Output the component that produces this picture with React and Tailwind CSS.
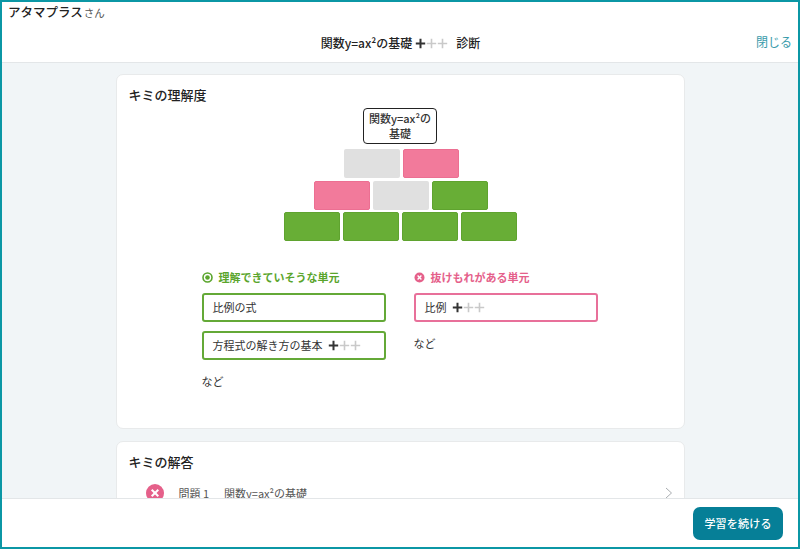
const jp = { fontFamily: '"Noto Sans CJK JP", "Noto Sans", sans-serif' };

function Plus({ size = 11 }) {
  const colors = ["#333333", "#c9c9c9", "#c9c9c9"];
  return (
    <span className="inline-flex items-center">
      {colors.map((c, i) => (
        <svg key={i} width={size} height={size} viewBox="0 0 11 11" className="block">
          <path d="M0.8 5.5H10.2M5.5 0.8V10.2" stroke={c} strokeWidth={i === 0 ? 2 : 1.6} fill="none" />
        </svg>
      ))}
    </span>
  );
}

function Brick({ color }) {
  const cls = {
    gray: "bg-[#e0e0e0]",
    pink: "bg-[#f27a9b] border border-[#ec6f92]",
    green: "bg-[#68ae36] border border-[#5fa32f]",
  }[color];
  return <div className={`w-[56px] h-[29px] rounded-[2px] ${cls}`} />;
}

function UnitBox({ border, children }) {
  return (
    <div className={`w-[184px] h-[29px] rounded-[3px] border-2 ${border} bg-white flex items-center gap-[5px] pl-[9px] text-[11px] text-[#333]`}>
      {children}
    </div>
  );
}

export default function App() {
  return (
    <div style={jp} className="w-[800px] h-[549px] border-2 border-[#0b97a5] flex flex-col overflow-hidden bg-white text-[#222]">
      <header className="h-[61px] shrink-0 bg-white border-b border-[#e3e6e8] relative flex flex-col">
        <div className="pl-[6px] pt-[1px] h-[21px] flex items-baseline">
          <span className="text-[12.5px] leading-[18px] font-medium text-[#222]">アタマプラス</span>
          <span className="text-[10.5px] ml-[1px] text-[#555]">さん</span>
        </div>
        <div className="flex-1 flex items-center justify-center gap-[3px] pt-[1px] pl-[1px] text-[12px] font-medium">
          <span>関数y=ax²の基礎</span>
          <Plus />
          <span className="ml-[5px]">診断</span>
        </div>
        <span className="absolute right-[6px] top-[31px] text-[12px] leading-[18px] text-[#3a9bab]">閉じる</span>
      </header>

      <main className="flex-1 min-h-0 overflow-hidden bg-[#f1f5f7] flex flex-col items-center pt-[11px] gap-[12px]">
        <section className="w-[569px] h-[355px] shrink-0 bg-white rounded-[7px] border border-[#e8eaeb] flex flex-col items-center relative">
          <h2 className="self-start pl-[12px] pt-[10px] text-[13px] leading-[20px] font-medium text-[#222]">キミの理解度</h2>
          <div className="mt-[3px] w-[74px] h-[36px] rounded-[4px] border border-[#222] flex items-center justify-center text-center text-[11px] leading-[15px] font-medium text-[#333]">
            関数y=ax²の<br />基礎
          </div>
          <div className="mt-[5px] flex flex-col items-center">
            <div className="flex gap-[3px] pl-[2px]"><Brick color="gray" /><Brick color="pink" /></div>
            <div className="mt-[3px] flex gap-[3px] pl-[2px]"><Brick color="pink" /><Brick color="gray" /><Brick color="green" /></div>
            <div className="mt-[2px] flex gap-[3px] pl-[1px]"><Brick color="green" /><Brick color="green" /><Brick color="green" /><Brick color="green" /></div>
          </div>
          <div className="mt-[27px] w-full flex pl-[85px] gap-[28px]">
            <div className="w-[184px] flex flex-col">
              <div className="flex items-center gap-[6px] h-[18px] text-[11px] font-bold text-[#5aa52c]">
                <svg width="11" height="11" viewBox="0 0 11 11">
                  <circle cx="5.5" cy="5.5" r="4.5" fill="none" stroke="#5aa52c" strokeWidth="1.6" />
                  <circle cx="5.5" cy="5.5" r="2.3" fill="#5aa52c" />
                </svg>
                <span>理解できていそうな単元</span>
              </div>
              <div className="mt-[7px] flex flex-col gap-[9px]">
                <UnitBox border="border-[#64a937]">比例の式</UnitBox>
                <UnitBox border="border-[#64a937]">
                  <span>方程式の解き方の基本</span>
                  <Plus />
                </UnitBox>
              </div>
              <p className="mt-[12px] text-[11px] leading-[18px] text-[#333]">など</p>
            </div>
            <div className="w-[184px] flex flex-col">
              <div className="flex items-center gap-[6px] h-[18px] text-[11px] font-bold text-[#e5608a]">
                <svg width="11" height="11" viewBox="0 0 11 11">
                  <circle cx="5.5" cy="5.5" r="5" fill="#e5608a" />
                  <path d="M3.6 3.6L7.4 7.4M7.4 3.6L3.6 7.4" stroke="#fff" strokeWidth="1.4" />
                </svg>
                <span>抜けもれがある単元</span>
              </div>
              <div className="mt-[7px]">
                <UnitBox border="border-[#e8709a]">
                  <span>比例</span>
                  <Plus />
                </UnitBox>
              </div>
              <p className="mt-[12px] text-[11px] leading-[18px] text-[#333]">など</p>
            </div>
          </div>
        </section>

        <section className="w-[569px] h-[100px] shrink-0 bg-white rounded-[7px] border border-[#e8eaeb] flex flex-col">
          <h2 className="pl-[12px] pt-[10px] text-[13px] leading-[20px] font-medium text-[#222]">キミの解答</h2>
          <div className="mt-[12px] flex items-center pl-[29px] pr-[11px] text-[11px] leading-[18px] text-[#555]">
            <svg width="18" height="18" viewBox="0 0 18 18" className="shrink-0">
              <circle cx="9" cy="9" r="9" fill="#e5608a" />
              <path d="M5.7 5.7L12.3 12.3M12.3 5.7L5.7 12.3" stroke="#fff" strokeWidth="2" />
            </svg>
            <span className="ml-[15px]">問題 1</span>
            <span className="ml-[15px] flex-1">関数y=ax²の基礎</span>
            <svg width="8" height="12" viewBox="0 0 8 12">
              <path d="M1 1L6.5 6L1 11" stroke="#a9adb0" strokeWidth="1" fill="none" />
            </svg>
          </div>
        </section>
      </main>

      <footer className="h-[49px] shrink-0 bg-white border-t border-[#e3e6e8] flex items-start justify-end pr-[15px] pt-[8px]">
        <button className="w-[90px] h-[33px] rounded-[7px] bg-[#067f97] text-white text-[11px] font-medium tracking-[0.2px]">学習を続ける</button>
      </footer>
    </div>
  );
}
